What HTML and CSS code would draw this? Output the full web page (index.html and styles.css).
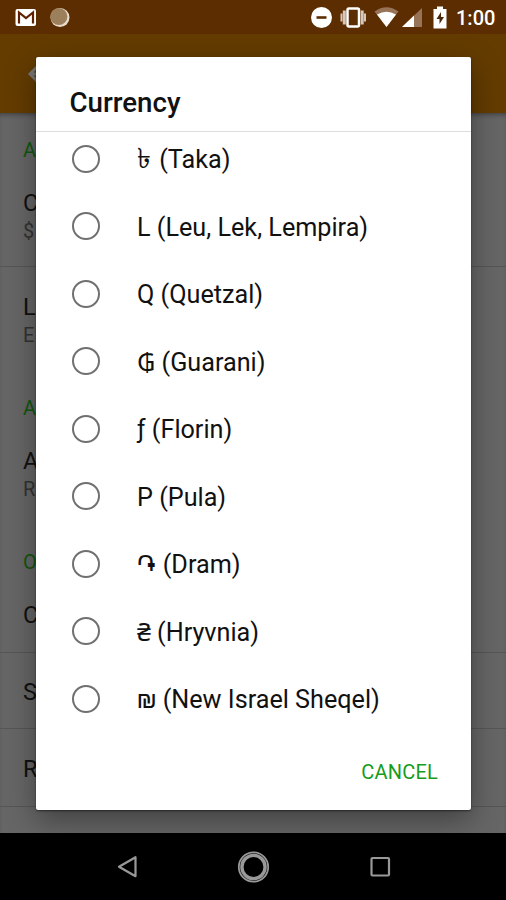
FILE: index.html
```html
<!DOCTYPE html>
<html lang="en">
<head>
<meta charset="utf-8">
<title>Currency</title>
<link rel="stylesheet" href="styles.css">
</head>
<body>
<div class="phone">
  <header class="status">
    <svg class="notices" width="80" height="34" viewBox="0 0 80 34">
      <rect x="15.500" y="9" width="20.500" height="17" rx="2" fill="#fff"/>
      <path d="M19 23.500V12.500l7 5.500 7-5.500V23.500" fill="none" stroke="#612000" stroke-width="2.200"/>
      <circle cx="60" cy="17.500" r="9.500" fill="#eadccd"/>
      <circle cx="58.800" cy="16.500" r="8.600" fill="#9c805c"/>
    </svg>
    <svg class="system" width="146" height="34" viewBox="308 0 146 34">
      <circle cx="321.500" cy="17.500" r="10.500" fill="#fff"/>
      <path d="M316.500 17.500h10" stroke="#5c2d00" stroke-width="2.600"/>
      <rect x="347.500" y="8.500" width="11.500" height="18" rx="1.500" fill="none" stroke="#fff" stroke-width="2.500"/>
      <path d="M344.300 10.500v14M362.200 10.500v14" stroke="#d8c8bb" stroke-width="3"/>
      <path d="M341.500 13.500v8M365 13.500v8" stroke="#d8c8bb" stroke-width="2"/>
      <path d="M374.500 11.500Q386.500 3 398.500 11.500L386.500 27z" fill="#977357"/>
      <path d="M377 14.500Q386.500 9 396 14.500L386.500 27z" fill="#fff"/>
      <path d="M402 27L422 8v19z" fill="#977357"/>
      <path d="M402 27L414 15.600V27z" fill="#fff"/>
      <path d="M433.500 9h3.500V6.500h6V9h3.500v19.500h-13z" fill="#fff"/>
      <path d="M441 12l-4.500 7h3v5l4.500-7h-3z" fill="#4d2608"/>
    </svg>
    <span class="clock">1:00</span>
  </header>
  <div class="appbar">
    <svg width="24" height="24" viewBox="0 0 24 24"><path d="M12 3L3 12l9 9M3 12h18" fill="none" stroke="#777" stroke-width="3"/></svg>
  </div>
  <main class="settings">
    <h2 class="section">A</h2>
    <div class="item item-line"><p>C</p><small>$</small></div>
    <div class="item item-tall"><p>L</p><small>E</small></div>
    <h2 class="section">A</h2>
    <div class="item"><p>A</p><small>R</small></div>
    <h2 class="section">O</h2>
    <div class="item item-short"><p>C</p></div>
    <div class="item item-single"><p>S</p></div>
    <div class="item item-single item-last"><p>R</p></div>
  </main>
  <nav class="navbar">
    <svg width="506" height="67" viewBox="0 833 506 67" fill="none" stroke="#999">
      <path d="M119 866.700l16.500-9.500v19z" stroke-width="2.200" stroke-linejoin="round"/>
      <circle cx="253.500" cy="867" r="14.700" stroke-width="1.800"/>
      <circle cx="253.500" cy="867" r="11.600" stroke-width="3.400"/>
      <rect x="371.500" y="858" width="17.500" height="17.500" rx="1" stroke-width="2.200"/>
    </svg>
  </nav>
  <section class="dialog" role="dialog">
    <h1>Currency</h1>
    <ul>
      <li><i></i><span><b class="taka">৳</b> (Taka)</span></li>
      <li><i></i><span>L (Leu, Lek, Lempira)</span></li>
      <li><i></i><span>Q (Quetzal)</span></li>
      <li><i></i><span>₲ (Guarani)</span></li>
      <li><i></i><span>ƒ (Florin)</span></li>
      <li><i></i><span>P (Pula)</span></li>
      <li><i></i><span><b class="dram">֏</b> (Dram)</span></li>
      <li><i></i><span>₴ (Hryvnia)</span></li>
      <li><i></i><span>₪ (New Israel Sheqel)</span></li>
    </ul>
    <footer><button>CANCEL</button></footer>
  </section>
</div>
</body>
</html>
```
FILE: styles.css
```css
* { box-sizing: border-box; margin: 0; padding: 0; }
body { font-family: Roboto, "Noto Sans", "DejaVu Sans", sans-serif; color: #111; }
.phone { position: relative; width: 506px; height: 900px; overflow: hidden; background: #666; display: flex; flex-direction: column; }
.status { height: 34px; flex: none; background: #5c2d00; display: flex; align-items: center; padding-right: 10px; }
.status svg { flex: none; }
.system { margin-left: auto; }
.clock { color: #fff; font-size: 20px; font-weight: 500; line-height: 34px; width: 40px; margin-left: 2px; padding-top: 2px; white-space: nowrap; }
.appbar { height: 79px; flex: none; background: #643c00; display: flex; align-items: center; padding-left: 27px; }
.settings { flex: 1; box-shadow: inset 0 4px 4px -2px #444; }
.section { height: 74px; line-height: 75px; padding-left: 23px; font-size: 20px; font-weight: 400; color: #10580f; }
.item { height: 80px; padding-left: 23px; }
.item p { font-size: 23.5px; line-height: 32px; height: 30px; }
.item small { display: block; font-size: 20px; line-height: 28px; color: #333; }
.item-line, .item-short, .item-single { border-bottom: 1px solid #565656; }
.item-tall { height: 104px; padding-top: 24px; }
.item-short { height: 54px; }
.item-single { height: 76px; padding-top: 23px; }
.item-last { height: 78px; padding-top: 24px; }
.navbar { height: 67px; flex: none; background: #000; }
.navbar svg { display: block; }
.dialog { position: absolute; left: 36px; top: 57px; width: 435px; height: 753px; background: #fff; border-radius: 2px; display: flex; flex-direction: column; box-shadow: 0 1px 2px rgba(0,0,0,.5), 0 10px 30px rgba(0,0,0,.38); }
.dialog h1 { height: 75px; padding: 6px 0 0 33.5px; border-bottom: 1px solid #ddd; font-size: 27.7px; font-weight: 500; line-height: 80px; color: #111; }
.dialog ul { list-style: none; height: 602px; margin-top: -7px; }
.dialog li { height: 67.5px; display: flex; align-items: center; padding-left: 36px; font-size: 25.2px; line-height: 36px; }
.dialog i { width: 28px; height: 28px; border: 2.5px solid #707070; border-radius: 50%; margin-right: 37px; }
.dialog li span { white-space: nowrap; padding-top: 3px; }
.dialog b { display: inline-block; font-weight: 400; line-height: 30px; }
.taka { width: 16px; font-size: 28px; }
.dram { width: 19.5px; font-family: "DejaVu Sans", sans-serif; }
.dialog footer { display: flex; justify-content: flex-end; padding: 25px 33px 0 0; }
.dialog button { border: 0; background: none; font: 400 20px/40px Roboto, sans-serif; letter-spacing: .2px; color: #169c1c; }
```
